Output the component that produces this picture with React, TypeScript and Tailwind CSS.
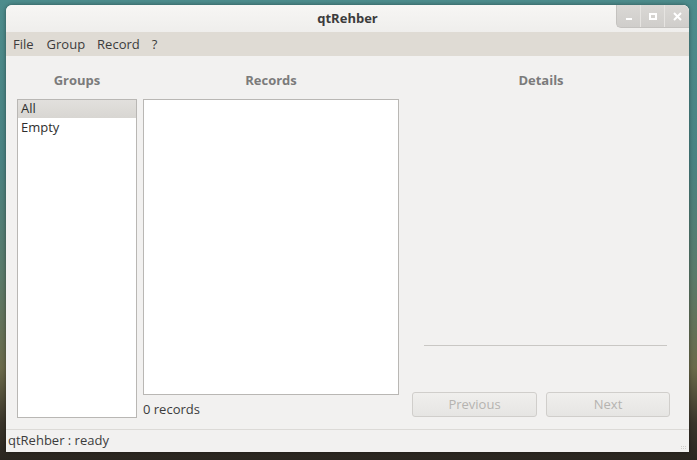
import React from "react";

const font = { fontFamily: '"Open Sans", "DejaVu Sans", sans-serif' };

export default function App() {
  return (
    <div
      className="w-[697px] h-[460px] overflow-hidden pt-[5px] pl-[6px]"
      style={{
        ...font,
        background:
          "linear-gradient(180deg, #4d8c8c 0%, #4a8282 35%, #5a7a6a 60%, #6b6a4a 80%, #3a342a 92%, #2a2620 100%)",
      }}
    >
      <div className="w-[683px] h-[447px] bg-[#f2f1f0] rounded-t-[6px] flex flex-col shadow-[0_0_4px_rgba(0,0,0,0.4)] overflow-hidden">
        {/* Title bar */}
        <div className="h-[27px] relative flex items-center justify-center bg-gradient-to-b from-[#f7f6f4] to-[#efeeec]">
          <span className="text-[13px] font-bold text-[#3c3c3c] leading-none">qtRehber</span>
          <div className="absolute right-0 top-0 flex h-[23px] rounded-bl-[5px] rounded-tr-[6px] overflow-hidden bg-gradient-to-b from-[#dad8d5] to-[#cfcdca] border-l border-b border-[#c4c2bf]">
            <div className="w-[24px] flex items-end justify-center pb-[7px] border-r border-[#e6e4e1]">
              <div className="w-[6px] h-[2px] bg-white" />
            </div>
            <div className="w-[24px] flex items-center justify-center border-r border-[#e6e4e1]">
              <div className="w-[8px] h-[7px] border-2 border-white" />
            </div>
            <div className="w-[24px] flex items-center justify-center">
              <svg width="9" height="9" viewBox="0 0 9 9">
                <path d="M1 1 L8 8 M8 1 L1 8" stroke="#ffffff" strokeWidth="2" />
              </svg>
            </div>
          </div>
        </div>
        {/* Menu bar */}
        <div className="h-[24px] bg-[#dfdbd4] flex items-center pl-[7px] pt-[1px] text-[13px] text-[#3c3c3c] gap-[12px]">
          <span>File</span>
          <span className="ml-[1px]">Group</span>
          <span>Record</span>
          <span>?</span>
        </div>
        {/* Content */}
        <div className="flex-1 flex px-[11px] pt-[15px] pb-[10px] gap-[6px]">
          {/* Groups */}
          <div className="w-[120px] flex flex-col">
            <div className="h-[28px] flex items-start justify-center text-[13px] font-bold text-[#7b7b7b]">Groups</div>
            <div className="h-[319px] bg-white border border-[#b9b7b4] text-[13px] text-[#2e2e2e]">
              <div className="h-[18px] bg-gradient-to-b from-[#e2e0dd] to-[#d8d6d2] flex items-center pl-[3px]">All</div>
              <div className="h-[19px] flex items-center pl-[3px]">Empty</div>
            </div>
          </div>
          {/* Records */}
          <div className="w-[256px] flex flex-col">
            <div className="h-[28px] flex items-start justify-center text-[13px] font-bold text-[#7b7b7b]">Records</div>
            <div className="h-[296px] bg-white border border-[#b9b7b4]" />
            <div className="pt-[5px] text-[13px] text-[#3c3c3c] leading-[18px]">0 records</div>
          </div>
          {/* Details */}
          <div className="flex-1 flex flex-col pl-[7px] pr-[8px]">
            <div className="h-[28px] flex items-start justify-center text-[13px] font-bold text-[#7b7b7b]">Details</div>
            <div className="h-[246px]" />
            <div className="ml-[12px] mr-[3px] h-px bg-[#c9c7c4]" />
            <div className="h-[46px]" />
            <div className="flex gap-[9px]">
              <button className="w-[125px] h-[25px] rounded-[3px] border border-[#d0cecb] bg-gradient-to-b from-[#f0efed] to-[#e6e5e3] text-[13px] text-[#b5b3b0]">Previous</button>
              <button className="w-[124px] h-[25px] rounded-[3px] border border-[#d0cecb] bg-gradient-to-b from-[#f0efed] to-[#e6e5e3] text-[13px] text-[#b5b3b0]">Next</button>
            </div>
          </div>
        </div>
        {/* Status bar */}
        <div className="h-[23px] border-t border-[#dcdad7] flex items-center pl-[2px] text-[13px] text-[#3c3c3c] relative">
          qtRehber : ready
          <div className="absolute right-[3px] bottom-[3px] grid grid-cols-3 gap-[1px]">
            {[0, 1, 2, 3, 4, 5].map((i) => (
              <div key={i} className="w-[1px] h-[1px] bg-[#cfcdca]" />
            ))}
          </div>
        </div>
      </div>
    </div>
  );
}
